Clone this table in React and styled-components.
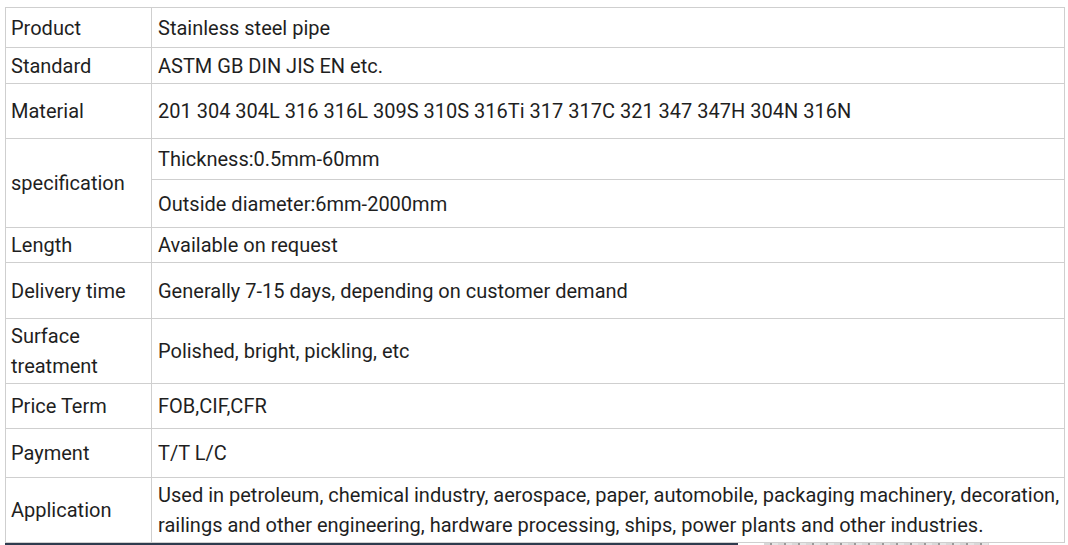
import React from 'react';
import styled, { createGlobalStyle } from 'styled-components';

const GlobalStyle = createGlobalStyle`
  html, body {
    margin: 0;
    padding: 0;
    background: #fff;
  }
  body {
    font-family: Roboto, "Liberation Sans", Arial, sans-serif;
    overflow: hidden;
  }
`;

const Page = styled.div`
  padding: 7px 3px 0 5px;
  height: 545px;
  box-sizing: border-box;
  display: flex;
  flex-direction: column;
`;

const SpecTable = styled.table`
  width: 1060px;
  border-collapse: collapse;
  table-layout: fixed;
  color: #1f1f1f;
  font-size: 20px;
  line-height: 30px;
`;

const Cell = styled.td`
  border: 1px solid #cfcfcf;
  padding: 0 ${(p) => (p.$label ? 5 : 6)}px;
  vertical-align: middle;
  height: ${(p) => p.$h}px;
  box-sizing: border-box;
  width: ${(p) => (p.$label ? '146px' : 'auto')};
  white-space: nowrap;
`;

const Bottom = styled.div`
  display: flex;
  align-items: stretch;
  height: 3px;
`;

const DarkBar = styled.div`
  width: 733px;
  background: #2e3b4e;
`;

const Noise = styled.div`
  margin-left: 26px;
  width: 225px;
  background: repeating-linear-gradient(90deg, #d8d8d8 0 6px, #9a9a9a 6px 8px, #e6e6e6 8px 14px);
`;

const rows = [
  { label: 'Product', value: 'Stainless steel pipe', h: 40 },
  { label: 'Standard', value: 'ASTM GB DIN JIS EN etc.', h: 36 },
  {
    label: 'Material',
    value: '201 304 304L 316 316L 309S 310S 316Ti 317 317C 321 347 347H 304N 316N',
    h: 55,
  },
];

const rest = [
  { label: 'Length', value: 'Available on request', h: 35 },
  { label: 'Delivery time', value: 'Generally 7-15 days, depending on customer demand', h: 56 },
  { label: <>Surface<br />treatment</>, value: 'Polished, bright, pickling, etc', h: 65 },
  { label: 'Price Term', value: 'FOB,CIF,CFR', h: 45 },
  { label: 'Payment', value: 'T/T L/C', h: 49 },
  {
    label: 'Application',
    value: (
      <>
        Used in petroleum, chemical industry, aerospace, paper, automobile, packaging machinery, decoration,
        <br />
        railings and other engineering, hardware processing, ships, power plants and other industries.
      </>
    ),
    h: 65,
  },
];

export default function App() {
  return (
    <>
      <GlobalStyle />
      <Page>
        <SpecTable>
          <tbody>
            {rows.map((r) => (
              <tr key={r.label}>
                <Cell $label $h={r.h}>{r.label}</Cell>
                <Cell $h={r.h}>{r.value}</Cell>
              </tr>
            ))}
            <tr>
              <Cell $label rowSpan={2} $h={41}>specification</Cell>
              <Cell $h={41}>Thickness:0.5mm-60mm</Cell>
            </tr>
            <tr>
              <Cell $h={48}>Outside diameter:6mm-2000mm</Cell>
            </tr>
            {rest.map((r, i) => (
              <tr key={i}>
                <Cell $label $h={r.h}>{r.label}</Cell>
                <Cell $h={r.h}>{r.value}</Cell>
              </tr>
            ))}
          </tbody>
        </SpecTable>
        <Bottom>
          <DarkBar />
          <Noise />
        </Bottom>
      </Page>
    </>
  );
}
